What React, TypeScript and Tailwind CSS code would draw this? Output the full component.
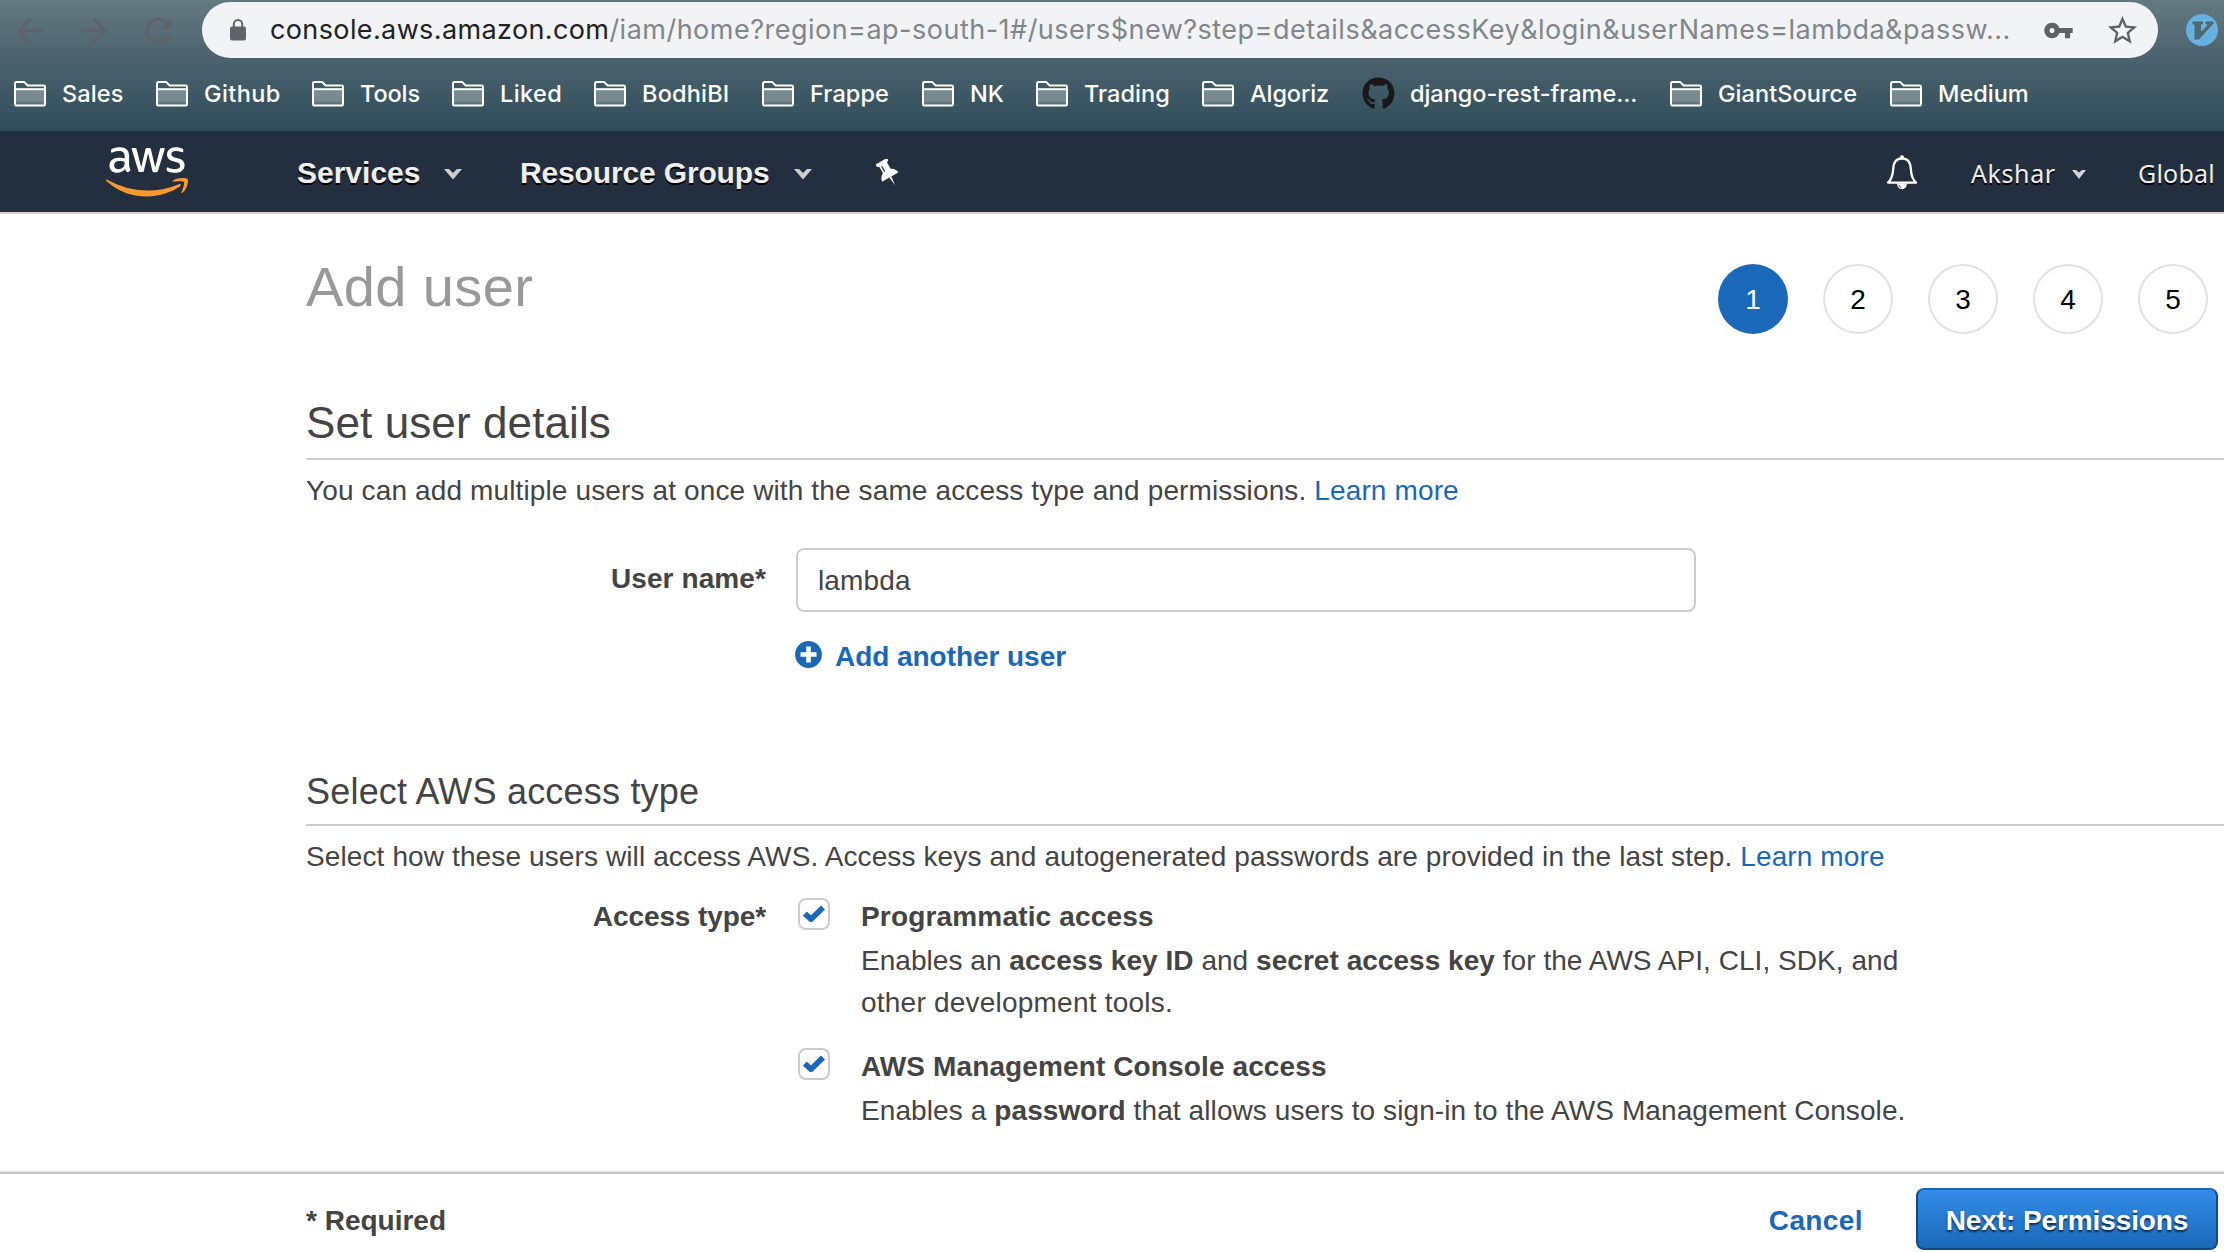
import type { ReactNode } from "react";
import { FaAws, FaGithub } from "react-icons/fa";
import { MdArrowBack, MdArrowForward, MdRefresh, MdStarBorder, MdVpnKey } from "react-icons/md";

type Bookmark = { label: string; width: string; tracking: string; github?: boolean };

const bookmarks: Bookmark[] = [
  { label: "Sales", width: "w-[142px]", tracking: "tracking-[0.1px]" },
  { label: "Github", width: "w-[156px]", tracking: "tracking-[0.4px]" },
  { label: "Tools", width: "w-[140px]", tracking: "tracking-[-0.1px]" },
  { label: "Liked", width: "w-[142px]", tracking: "tracking-[0.4px]" },
  { label: "BodhiBI", width: "w-[168px]", tracking: "tracking-[0.2px]" },
  { label: "Frappe", width: "w-[160px]", tracking: "tracking-[0.1px]" },
  { label: "NK", width: "w-[114px]", tracking: "tracking-[0.1px]" },
  { label: "Trading", width: "w-[166px]", tracking: "tracking-[0.05px]" },
  { label: "Algoriz", width: "w-[160px]", tracking: "tracking-[-0.1px]" },
  { label: "django-rest-frame...", width: "w-[308px]", tracking: "tracking-[-0.05px]", github: true },
  { label: "GiantSource", width: "w-[220px]", tracking: "tracking-[0.05px]" },
  { label: "Medium", width: "w-[142px]", tracking: "tracking-[0px]" },
];

function FolderIcon() {
  return (
    <svg width="32" height="26" viewBox="0 0 32 26" fill="none">
      <path d="M2 9H30V24H2Z" fill="#778a90" />
      <path d="M2 21H30V24H2Z" fill="#5f747d" />
      <path d="M1 23.2V2.4Q1 1 2.4 1H10.2L13.6 4.4H29.6Q31 4.4 31 5.8V23.2Q31 24.4 29.8 24.4H2.2Q1 24.4 1 23.2Z" stroke="#fff" strokeWidth="2" />
      <path d="M1 8.2H31" stroke="#fff" strokeWidth="2" />
    </svg>
  );
}

function LockIcon() {
  return (
    <svg width="16" height="22" viewBox="0 0 16 22">
      <rect x="0" y="7.5" width="16" height="14" rx="2" fill="#5f6368" />
      <path d="M3.8 8V5.2a4.2 4.2 0 0 1 8.4 0V8" fill="none" stroke="#5f6368" strokeWidth="2" />
    </svg>
  );
}

function VimiumIcon() {
  return (
    <svg width="32" height="32" viewBox="0 0 32 32">
      <circle cx="16" cy="16" r="16" fill="#66b1e1" />
      <path d="M6 7H17.5V10.5L15.5 11V17L21 11L19 10.5V7H28V9.5L13 26H8V11L6 10.5Z" fill="#4d6b77" stroke="#86c4ea" strokeWidth="0.6" />
    </svg>
  );
}

function AwsLogo() {
  return (
    <div className="relative h-[66px] w-[82px]">
      <FaAws className="absolute inset-0 h-[65.6px] w-[82px] text-white [clip-path:inset(0_0_29px_0)]" />
      <FaAws className="absolute inset-0 h-[65.6px] w-[82px] text-[#f79830] [clip-path:inset(36.6px_0_0_0)]" />
    </div>
  );
}

function Caret({ small = false }: { small?: boolean }) {
  return small ? (
    <svg className="mt-[4px]" width="14" height="9" viewBox="0 0 14 9">
      <path d="M0 0H4L7 2.6L10 0H14L7 9Z" fill="#d4d4d4" />
    </svg>
  ) : (
    <svg className="mt-[6px]" width="18" height="11" viewBox="0 0 18 11">
      <path d="M0 0H5L9 4L13 0H18L9 10.5Z" fill="#cfcfcf" />
    </svg>
  );
}

function PinIcon() {
  return (
    <svg width="26" height="30" viewBox="0 0 26 30">
      <g transform="rotate(-30 13 14)">
        <path d="M7 0.5H19Q20.6 2.4 18.6 3.8L17.4 4.4V11.6Q22 13.8 22.4 18.6H14.2L13 28.2L11.8 18.6H3.6Q4 13.8 8.6 11.6V4.4L7.4 3.8Q5.4 2.4 7 0.5Z" fill="#fff" />
        <path d="M10.8 5V11.4" stroke="#232f3e" strokeWidth="1.2" />
      </g>
    </svg>
  );
}

function BellIcon() {
  return (
    <svg width="32" height="35" viewBox="0 0 32 35">
      <circle cx="16" cy="2.2" r="2" fill="#fff" />
      <path d="M2 27.6Q6.6 23.4 7.2 14Q7.6 3.6 16 3.4Q24.4 3.6 24.8 14Q25.4 23.4 30 27.6Z" fill="none" stroke="#fff" strokeWidth="2.3" strokeLinejoin="round" />
      <path d="M11 28.6H21Q20.4 34.2 16 34.2Q11.6 34.2 11 28.6Z" fill="#fff" />
      <path d="M13 30Q13.4 32.2 15.4 32.8" fill="none" stroke="#232f3e" strokeWidth="0.8" />
    </svg>
  );
}

function PlusCircle() {
  return (
    <svg width="27" height="27" viewBox="0 0 27 27">
      <circle cx="13.5" cy="13.5" r="13.4" fill="#1a68b8" />
      <path d="M5.5 13.5H21.5M13.5 5.5V21.5" stroke="#fff" strokeWidth="4.6" />
    </svg>
  );
}

function Checkbox() {
  return (
    <span className="mt-[2px] flex h-8 w-8 shrink-0 items-center justify-center rounded-[8px] border-2 border-[#ccc] bg-white">
      <svg width="24" height="20" viewBox="0 0 24 20">
        <path d="M2.8 9.6L9 15.2L21 3.4" fill="none" stroke="#1a68b8" strokeWidth="5.6" strokeLinejoin="round" />
      </svg>
    </span>
  );
}

function Option({ title, titleTracking, children }: { title: string; titleTracking: string; children: ReactNode }) {
  return (
    <div className="flex gap-[31px]">
      <Checkbox />
      <div>
        <div className={`font-bold ${titleTracking}`}>{title}</div>
        <p className="mt-[2px] w-[1060px]">{children}</p>
      </div>
    </div>
  );
}

const navShadow = "[text-shadow:0_2px_0_#000]";

export default function App() {
  return (
    <div className="flex h-[1252px] w-[2224px] flex-col overflow-hidden bg-white font-['Liberation_Sans',Arial,sans-serif] text-[28px] leading-[42px] text-[#444]">
      {/* Browser toolbar and bookmarks */}
      <div className="h-[131px] shrink-0 bg-[linear-gradient(#647a81_0px,#4b626e_60px,#2e4d58_131px)] font-[Inter,sans-serif]">
        <div className="flex h-[58px] items-center pt-[2px] text-[#5f6368]">
          <MdArrowBack className="ml-[10px] size-[39px]" />
          <MdArrowForward className="ml-[26px] size-[39px]" />
          <MdRefresh className="ml-[25px] size-[39px]" />
          <div className="ml-[24px] flex h-14 w-[1956px] items-center rounded-full bg-[#f1f3f4] pl-7 text-[#5f6368]">
            <LockIcon />
            <div className="ml-6 w-[1760px] whitespace-nowrap text-[27px] text-[#80868b]">
              <span className="tracking-[0.38px] text-[#202124]">console.aws.amazon.com</span>
              <span className="tracking-[0.49px]">/iam/home?region=ap-south-1#/users$new?step=details&amp;accessKey&amp;login&amp;userNames=lambda&amp;passw...</span>
            </div>
            <MdVpnKey className="ml-[13px] size-[31px]" />
            <MdStarBorder className="ml-[31px] size-[35px]" />
          </div>
          <div className="ml-7">
            <VimiumIcon />
          </div>
        </div>
        <div className="flex h-[71px] items-center pl-[14px] text-[23.5px] font-medium text-white">
          {bookmarks.map((b) => (
            <div key={b.label} className={`flex shrink-0 items-center whitespace-nowrap ${b.width}`}>
              <span className="mr-4 flex w-8 justify-center">
                {b.github ? <FaGithub className="size-[33px] shrink-0 text-[#191717]" /> : <FolderIcon />}
              </span>
              <span className={b.tracking}>{b.label}</span>
            </div>
          ))}
        </div>
      </div>

      {/* AWS console navigation */}
      <nav className={`flex h-[83px] shrink-0 items-center border-b-2 border-[#d3d0cc] bg-[#232f3e] pl-[106px] text-[30px] font-bold text-[#eee] ${navShadow}`}>
        <AwsLogo />
        <span className="ml-[109px] w-[147px] pt-[3px] tracking-[0px]">Services</span>
        <Caret />
        <span className="ml-[58px] w-[274px] pt-[3px] tracking-[-0.15px]">Resource Groups</span>
        <Caret />
        <span className="ml-[63px] pt-[4px]">
          <PinIcon />
        </span>
        <div className="ml-auto flex items-center pt-[2px] font-['Noto_Sans',sans-serif] text-[25px] font-normal">
          <BellIcon />
          <span className="ml-[53px] w-[101px] tracking-[0.6px]">Akshar</span>
          <Caret small />
          <span className="ml-[52px] w-[86px] tracking-[0.2px]">Global</span>
        </div>
      </nav>

      {/* Wizard content */}
      <main className="h-[958px] shrink-0 pl-[306px]">
        <header className="flex h-[185px] items-start justify-between pr-4">
          <h1 className="mt-[41px] text-[56px] leading-[64px] tracking-[0.4px] text-[#999]">Add user</h1>
          <ol className="mt-[50px] flex gap-[35px] text-black">
            {[1, 2, 3, 4, 5].map((n) => (
              <li
                key={n}
                className={`flex size-[70px] items-center justify-center rounded-full pt-[2px] ${
                  n === 1 ? "bg-[#1a68b8] text-white" : "border-2 border-[#e0e0e0]"
                }`}
              >
                {n}
              </li>
            ))}
          </ol>
        </header>

        <h2 className="border-b-2 border-[#ccc] pb-[11px] text-[44px] leading-[48px] tracking-[0.1px]">Set user details</h2>
        <p className="mt-[10px] whitespace-nowrap tracking-[0.13px]">
          You can add multiple users at once with the same access type and permissions. <a className="text-[#1a68b8]">Learn more</a>
        </p>

        <div className="mt-[36px] flex gap-[30px]">
          <label className="w-[460px] pt-[10px] text-right font-bold tracking-[0.1px]">User name*</label>
          <div>
            <div className="flex h-16 w-[900px] items-center rounded-[8px] border-2 border-[#ccc] pl-[20px] pt-[2px] tracking-[0.15px]">lambda</div>
            <a className="mt-[24px] flex items-center font-bold tracking-[-0.05px] text-[#1a68b8]">
              <span className="-mt-[6px] -ml-[1px] mr-[13px]">
                <PlusCircle />
              </span>
              Add another user
            </a>
          </div>
        </div>

        <h3 className="mt-[93px] border-b-2 border-[#ccc] pb-[11px] text-[36px] leading-[42px] tracking-[0.2px]">Select AWS access type</h3>
        <p className="mt-[10px] whitespace-nowrap tracking-[0.115px]">
          Select how these users will access AWS. Access keys and autogenerated passwords are provided in the last step.{" "}
          <a className="text-[#1a68b8]">Learn more</a>
        </p>

        <div className="mt-[18px] flex gap-8">
          <span className="w-[460px] text-right font-bold tracking-[-0.1px]">Access type*</span>
          <div className="flex flex-col gap-[22px]">
            <Option title="Programmatic access" titleTracking="tracking-[0.17px]">
              <span className="tracking-[0.04px]">
                Enables an <b>access key ID</b> and <b>secret access key</b> for the AWS API, CLI, SDK, and
              </span>
              <br />
              <span className="tracking-[0.22px]">other development tools.</span>
            </Option>
            <Option title="AWS Management Console access" titleTracking="tracking-[0.12px]">
              <span className="tracking-[0.095px]">
                Enables a <b>password</b> that allows users to sign-in to the AWS Management Console.
              </span>
            </Option>
          </div>
        </div>
      </main>

      {/* Footer actions */}
      <footer className="flex h-[80px] shrink-0 items-start border-t-2 border-[#c4c4c4] pl-[306px] pr-[6px] font-bold shadow-[0_-1px_1px_#e8e8e8]">
        <span className="mt-[26px]">* Required</span>
        <a className="ml-auto mr-[53px] mt-[26px] tracking-[0.4px] text-[#1a68b8]">Cancel</a>
        <button className="mt-[14px] h-[62px] w-[302px] rounded-[8px] border-2 border-[#114a85] border-t-[#1c67b5] bg-[linear-gradient(#338de9,#1b68b8)] pt-[3px] tracking-[-0.1px] text-white [text-shadow:0_2px_2px_rgba(0,0,0,0.65)]">
          Next: Permissions
        </button>
      </footer>
    </div>
  );
}
